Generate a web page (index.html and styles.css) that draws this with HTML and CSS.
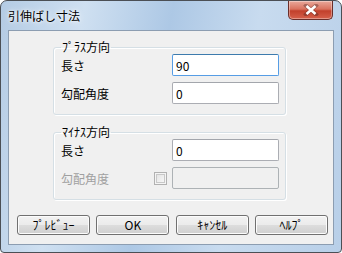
FILE: index.html
```html
<!DOCTYPE html>
<html lang="ja">
<head>
    <meta charset="UTF-8">
    <title>引伸ばし寸法</title>
    <link rel="stylesheet" href="styles.css">
</head>
<body>
    <div class="window">
        <div class="titlebar">
            <span class="title">引伸ばし寸法</span>
            <div class="close">
                <svg width="16" height="12" viewBox="0 0 16 12">
                    <path d="M3 1.5 L13 10.5 M13 1.5 L3 10.5" stroke="#3a1a1a" stroke-width="4" stroke-linecap="square" opacity="0.35"/>
                    <path d="M3.5 2 L12.5 10 M12.5 2 L3.5 10" stroke="#fff" stroke-width="2.6"/>
                </svg>
            </div>
        </div>
        <div class="client">
            <fieldset class="group">
                <legend>ﾌﾟﾗｽ方向</legend>
                <div class="row">
                    <label>長さ</label>
                    <input class="field focused" type="text" value="90">
                </div>
                <div class="row">
                    <label>勾配角度</label>
                    <input class="field" type="text" value="0">
                </div>
            </fieldset>
            <fieldset class="group second">
                <legend>ﾏｲﾅｽ方向</legend>
                <div class="row">
                    <label>長さ</label>
                    <input class="field" type="text" value="0">
                </div>
                <div class="row disabled">
                    <label>勾配角度</label>
                    <span class="check"></span>
                    <input class="field" type="text" value="" disabled>
                </div>
            </fieldset>
            <div class="buttons">
                <button>ﾌﾟﾚﾋﾞｭｰ</button>
                <button>OK</button>
                <button>ｷｬﾝｾﾙ</button>
                <button>ﾍﾙﾌﾟ</button>
            </div>
        </div>
    </div>
</body>
</html>
```

FILE: styles.css
```css
html, body {
    margin: 0;
    padding: 0;
}
body {
    font-family: "Noto Sans CJK JP", "Liberation Sans", sans-serif;
    font-size: 12px;
    background: #fff;
}
.window {
    width: 342px;
    height: 253px;
    box-sizing: border-box;
    border: 1px solid #4b4f55;
    border-radius: 7px 7px 4px 4px;
    background: linear-gradient(100deg, #b4cbe4 0%, #cfe0f1 22%, #adc8e5 45%, #c8dbef 68%, #b8cfe8 100%);
    display: flex;
    flex-direction: column;
    overflow: hidden;
}
.titlebar {
    height: 29px;
    display: flex;
    justify-content: space-between;
    align-items: flex-start;
    padding: 0 8px 0 7px;
}
.title {
    line-height: 14px;
    margin-top: 8px;
    color: #000;
    text-shadow: 0 0 6px #fff, 0 0 3px #fff;
}
.close {
    width: 45px;
    height: 19px;
    box-sizing: border-box;
    border: 1px solid #6a2e2a;
    border-top: none;
    border-radius: 0 0 5px 5px;
    background: linear-gradient(#e9a99c 0%, #d9725f 45%, #c2402c 55%, #d6604b 100%);
    display: flex;
    justify-content: center;
    align-items: center;
    box-shadow: inset 0 0 0 1px rgba(255, 255, 255, 0.35);
}
.client {
    flex: 1;
    margin: 0 7px 7px 7px;
    border: 1px solid #8c9db1;
    background: #f0f0f0;
    padding: 9px 0 0 8px;
}
.group {
    margin: 0 0 0 36px;
    width: 233px;
    box-sizing: border-box;
    border: 1px solid #d5dfe5;
    border-radius: 3px;
    padding: 0 6px 10px 7px;
    box-shadow: inset 1px 1px 0 #fff, 1px 1px 0 #fff;
}
.group.second {
    margin-top: 10px;
}
legend {
    padding: 0 1px;
    line-height: 14px;
    color: #000;
}
.row {
    display: flex;
    align-items: center;
    height: 22px;
}
.row + .row {
    margin-top: 6px;
}
.row label {
    flex: 1;
    color: #000;
}
.field {
    width: 107px;
    height: 22px;
    box-sizing: border-box;
    border: 1px solid #abadb3;
    border-top-color: #a3a6ac;
    border-radius: 2px;
    background: #fff;
    font-family: inherit;
    font-size: 12px;
    padding: 0 3px;
    color: #000;
    outline: none;
}
.field.focused {
    border-color: #569de5;
    border-top-color: #3d7bad;
}
.row.disabled label {
    color: #a0a0a0;
}
.row.disabled .field {
    background: #f0f0f0;
    border-color: #adb2b5;
}
.check {
    width: 13px;
    height: 13px;
    box-sizing: border-box;
    border: 1px solid #b1b1b1;
    background: linear-gradient(135deg, #e0e0e0, #fbfbfb);
    box-shadow: inset 0 0 0 1px #f4f4f4, inset 0 0 0 2px #c8c8c8;
    margin-right: 5px;
}
.buttons {
    display: flex;
    justify-content: space-between;
    width: 311px;
    margin-top: 15px;
}
button {
    width: 73px;
    height: 20px;
    border: 1px solid #707070;
    border-radius: 3px;
    background: linear-gradient(#f2f2f2 0%, #ebebeb 50%, #dddddd 51%, #cfcfcf 100%);
    box-shadow: inset 0 0 0 1px #fcfcfc;
    font-family: inherit;
    font-size: 12px;
    color: #000;
    padding: 0;
    line-height: 14px;
}
```
